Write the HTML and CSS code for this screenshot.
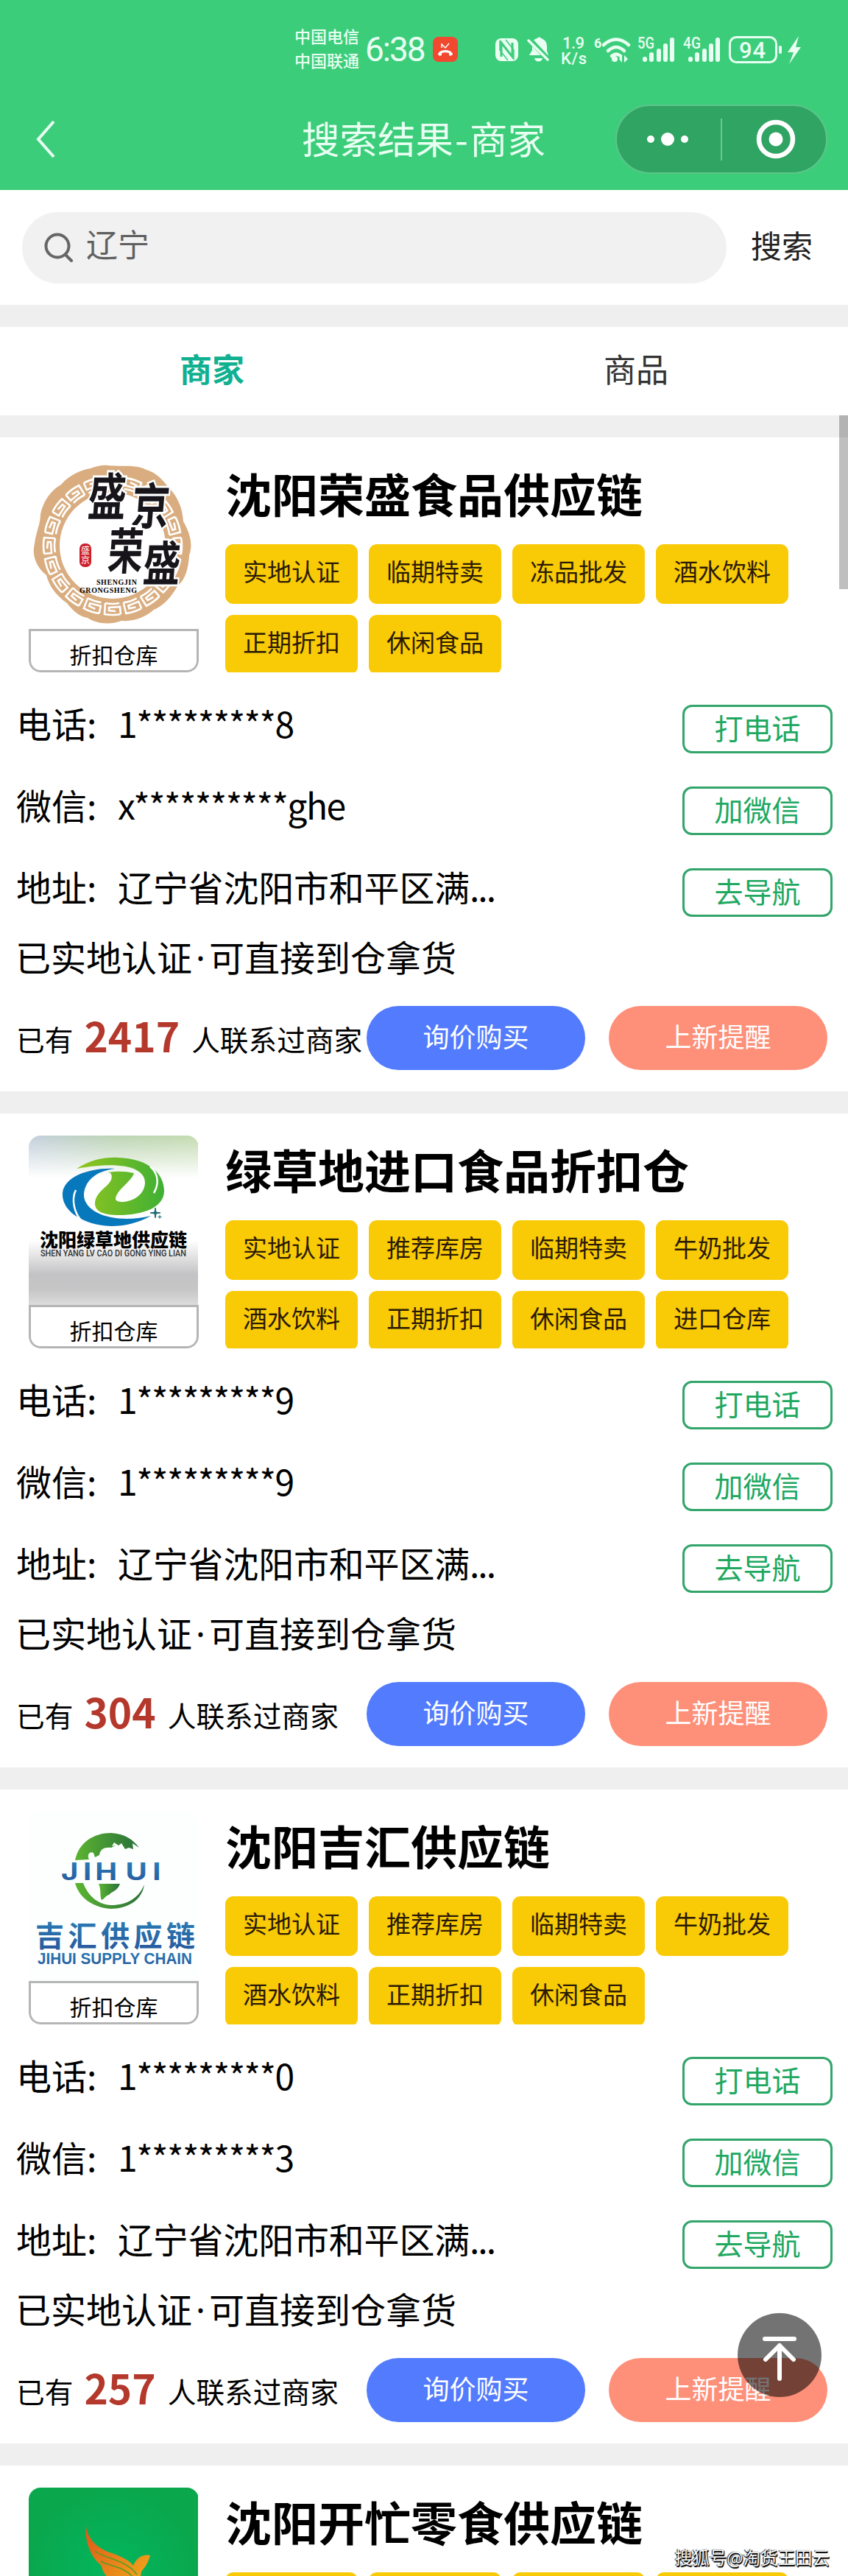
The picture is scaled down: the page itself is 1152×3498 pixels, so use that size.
FILE: index.html
```html
<!DOCTYPE html>
<html lang="zh-CN">
<head>
    <meta charset="UTF-8">
    <meta name="viewport" content="width=device-width, initial-scale=1.0">
    <title>搜索结果-商家</title>
    <link rel="stylesheet" href="styles.css">
</head>
<body>
<div class="page">

    <!-- 顶部 -->
    <header class="header">
        <div class="status-bar">
            <div class="carrier"><span>中国电信</span><span>中国联通</span></div>
            <div class="clock">6:38</div>
            <svg class="call-icon" width="34" height="34" viewBox="0 0 34 34">
                <rect width="34" height="34" rx="8" fill="#f0492f"/>
                <path d="M7 24c1-8 19-8 20 0q-3 3-5 1v-3c-3-1-7-1-10 0v3q-3 2-5-1z" fill="#fff"/>
                <path d="M12 9v6M12 10l5 5 5-6" fill="none" stroke="#fff" stroke-width="1.5"/>
            </svg>
            <svg class="status-icons" width="420" height="50" viewBox="670 42 420 50">
                <g fill="#e8fff2">
                    <!-- NFC -->
                    <rect x="673" y="52" width="31" height="31" rx="8"/>
                    <path d="M681 77V58l15 19V58" fill="none" stroke="#3ccd7b" stroke-width="3"/>
                    <path d="M687 54l11 14v13M679 55v13l11 14" fill="none" stroke="#3ccd7b" stroke-width="1.5"/>
                    <!-- 静音 -->
                    <path d="M719 75l4-7v-7c0-6 3-8 7-9 1-2 4-2 5 0 6 2 8 6 8 12v5l2 6z"/>
                    <path d="M726 79h11c-1 6-10 6-11 0z"/>
                    <path d="M718 52l27 29" stroke="#3ccd7b" stroke-width="7"/>
                    <path d="M718 55l26 26" stroke="#e8fff2" stroke-width="3.5" stroke-linecap="round"/>
                    <text x="764" y="66" class="net-text" textLength="30">1.9</text>
                    <text x="762" y="87" class="net-text" textLength="35">K/s</text>
                    <!-- WiFi -->
                    <text x="807" y="65" class="six">6</text>
                    <g fill="none" stroke="#e8fff2" stroke-width="4.5" stroke-linecap="round">
                        <path d="M820 61q17-15 34 0M826 69q11-10 22 0M831 76q6-5 12 0"/>
                    </g>
                    <circle cx="835" cy="80" r="4"/>
                    <path d="M845 75v10l-4-5zM848 75v10l5-5z"/>
                    <!-- 信号 -->
                    <text x="866" y="66" class="net-gen" textLength="23" lengthAdjust="spacingAndGlyphs">5G</text>
                    <text x="928" y="66" class="net-gen" textLength="24" lengthAdjust="spacingAndGlyphs">4G</text>
                    <g stroke="#e8fff2" stroke-width="6" stroke-linecap="round">
                        <path d="M876 80v1M885 74v7M895 69v12M904 62v19M913 54v27"/>
                        <path d="M938 80v1M947 74v7M957 69v12M966 62v19M975 54v27"/>
                    </g>
                    <!-- 电池 -->
                    <rect x="991.5" y="50.5" width="63" height="34" rx="9" fill="none" stroke="#e8fff2" stroke-width="3"/>
                    <rect x="1058" y="62" width="4" height="11" rx="2"/>
                    <text x="1004" y="79" class="battery-text" textLength="36">94</text>
                    <path d="M1085 49l-15 22h8l-6 16 16-23h-7z"/>
                </g>
            </svg>
        </div>
        <div class="nav-bar">
            <svg class="back" width="28" height="52" viewBox="0 0 28 52">
                <path d="M25 2L4 26l21 24" fill="none" stroke="#e8fff2" stroke-width="4"/>
            </svg>
            <h1 class="nav-title">搜索结果<i>-</i>商家</h1>
            <svg class="capsule" width="290" height="96" viewBox="0 0 290 96">
                <rect x="2" y="2" width="286" height="92" rx="46" fill="#2fa463" stroke="#5cc58a" stroke-width="2"/>
                <g fill="#fff">
                    <circle cx="49" cy="48" r="5"/>
                    <circle cx="72" cy="48" r="9"/>
                    <circle cx="95" cy="48" r="5"/>
                </g>
                <path d="M145 20v57" stroke="#6fc795" stroke-width="2"/>
                <circle cx="219" cy="48" r="23" fill="none" stroke="#fff" stroke-width="6.5"/>
                <circle cx="219" cy="48" r="9.5" fill="#fff"/>
            </svg>
        </div>
    </header>

    <!-- 搜索 -->
    <div class="search">
        <div class="search-box">
            <svg width="40" height="40" viewBox="0 0 40 40">
                <circle cx="18" cy="18" r="15.5" fill="none" stroke="#666" stroke-width="4"/>
                <path d="M29 30l8 8" stroke="#666" stroke-width="4" stroke-linecap="round"/>
            </svg>
            <span>辽宁</span>
        </div>
        <div class="search-btn">搜索</div>
    </div>

    <div class="tabs">
        <div class="tab active">商家</div>
        <div class="tab">商品</div>
    </div>

    <!-- 商家 1 -->
    <div class="card">
        <div class="card-head">
            <div class="logo">
                <svg width="230" height="230" viewBox="0 0 230 230">
                    <defs>
                        <g id="key">
                            <path d="M-11 -93Q0 -95 11 -93L10 -78M-11 -93L-10 -83L5 -84V-88L-4 -89M10 -78Q0 -80 -9 -78"/>
                        </g>
                        <g id="keys">
                            <use href="#key"/>
                            <use href="#key" transform="rotate(18)"/>
                            <use href="#key" transform="rotate(36)"/>
                            <use href="#key" transform="rotate(54)"/>
                            <use href="#key" transform="rotate(72)"/>
                        </g>
                    </defs>
                    <path d="M108 8C128 10 145 6 160 14c14 4 22 14 30 24 14 14 19 30 20 46 8 14 14 30 8 46-1 16-4 32-16 42-8 14-18 26-32 32-14 12-30 16-44 15-16 6-34 4-46-4-12-2-20-10-28-20-14-10-24-22-28-38C10 146 4 130 8 114c2-16 8-26 8-40 4-18 14-32 28-40C56 20 72 14 84 12c8-3 16-5 24-4z" fill="#d9ad80"/>
                    <circle cx="114" cy="117" r="72" fill="#fff"/>
                    <g transform="translate(114 117)" fill="none" stroke="#fff" stroke-width="2.6">
                        <use href="#keys"/>
                        <use href="#keys" transform="rotate(90)"/>
                        <use href="#keys" transform="rotate(180)"/>
                        <use href="#keys" transform="rotate(270)"/>
                    </g>
                    <g class="brush">
                        <text transform="translate(79 76) scale(.86 1.15) skewX(-6)">盛</text>
                        <text transform="translate(138 88) scale(.86 1.12) skewX(-6)">京</text>
                        <text transform="translate(106 149) scale(.8 1.12) skewX(-6)">荣</text>
                        <text transform="translate(154 165) scale(.84 1.08) skewX(-6)">盛</text>
                    </g>
                    <rect x="69" y="114" width="16" height="32" rx="7" fill="#cc1f2b"/>
                    <text x="71" y="128" class="seal">盛</text>
                    <text x="71" y="141" class="seal">京</text>
                    <text x="92" y="170" class="latin" textLength="55">SHENGJIN</text>
                    <text x="69" y="181" class="latin" textLength="78">GRONGSHENG</text>
                </svg>
                <div class="logo-label">折扣仓库</div>
            </div>
            <div class="info">
                <h2>沈阳荣盛食品供应链</h2>
                <div class="tags">
                    <span>实地认证</span><span>临期特卖</span><span>冻品批发</span><span>酒水饮料</span>
                    <span>正期折扣</span><span>休闲食品</span>
                </div>
            </div>
        </div>
        <div class="row"><label>电话:</label><span class="mask">1*********8</span><button>打电话</button></div>
        <div class="row"><label>微信:</label><span class="mask">x**********ghe</span><button>加微信</button></div>
        <div class="row"><label>地址:</label><span class="addr">辽宁省沈阳市和平区满<i>...</i></span><button>去导航</button></div>
        <p class="note">已实地认证<i>·</i>可直接到仓拿货</p>
        <div class="card-foot">
            <div class="count">已有<b>2417</b>人联系过商家</div>
            <div class="btn blue">询价购买</div>
            <div class="btn orange">上新提醒</div>
        </div>
    </div>

    <!-- 商家 2 -->
    <div class="card">
        <div class="card-head">
            <div class="logo">
                <svg width="230" height="230" viewBox="0 0 230 230">
                    <defs>
                        <linearGradient id="silver" x1="0" y1="0" x2="0" y2="1">
                            <stop offset="0" stop-color="#fff" stop-opacity="0"/>
                            <stop offset=".25" stop-color="#fff"/>
                            <stop offset=".62" stop-color="#fff"/>
                            <stop offset=".82" stop-color="#c3c3c5"/>
                            <stop offset=".91" stop-color="#c6c6c7"/>
                            <stop offset="1" stop-color="#dcdcdc"/>
                        </linearGradient>
                        <linearGradient id="sky">
                            <stop offset="0" stop-color="#c3cfdd"/>
                            <stop offset=".5" stop-color="#bdd5b5"/>
                            <stop offset="1" stop-color="#c3dbb0"/>
                        </linearGradient>
                        <linearGradient id="leaf">
                            <stop offset="0" stop-color="#93c51f"/>
                            <stop offset="1" stop-color="#3fb034"/>
                        </linearGradient>
                    </defs>
                    <rect width="230" height="230" fill="url(#sky)"/>
                    <rect width="230" height="230" fill="url(#silver)"/>
                    <path d="M65 45C85 32 105 29 122 30C160 31 184 50 184 75C184 98 155 108 122 108C101 108 90 103 90 92C91 76 108 70 112 60C114 54 112 50 108 50Q126 47 143 51C140 62 119 74 118 86C119 95 157 90 158 64C158 43 125 34 65 45z" fill="url(#leaf)"/>
                    <path d="M165 42C178 53 176 68 170 78" fill="none" stroke="#fff" stroke-width="2.5"/>
                    <path d="M117 45C90 48 75 63 75 82C77 107 120 120 166 109C148 119 130 123 112 123C90 122 76 116 69 112C55 105 45 92 46 78C48 55 85 43 117 45z" fill="#0878bd"/>
                    <path d="M64 74C57 88 63 106 71 115" fill="none" stroke="#fff" stroke-width="2.5"/>
                    <path d="M172 98l1 6 6 1-6 1-1 6-1-6-6-1 6-1zM178 108v5M175.500 110.500h5" fill="#17656e" stroke="#17656e"/>
                    <text x="15" y="151" class="lv-name" textLength="200">沈阳绿草地供应链</text>
                    <text x="16" y="164" class="lv-latin" textLength="198" lengthAdjust="spacingAndGlyphs">SHEN YANG LV CAO DI GONG YING LIAN</text>
                </svg>
                <div class="logo-label">折扣仓库</div>
            </div>
            <div class="info">
                <h2>绿草地进口食品折扣仓</h2>
                <div class="tags">
                    <span>实地认证</span><span>推荐库房</span><span>临期特卖</span><span>牛奶批发</span>
                    <span>酒水饮料</span><span>正期折扣</span><span>休闲食品</span><span>进口仓库</span>
                </div>
            </div>
        </div>
        <div class="row"><label>电话:</label><span class="mask">1*********9</span><button>打电话</button></div>
        <div class="row"><label>微信:</label><span class="mask">1*********9</span><button>加微信</button></div>
        <div class="row"><label>地址:</label><span class="addr">辽宁省沈阳市和平区满<i>...</i></span><button>去导航</button></div>
        <p class="note">已实地认证<i>·</i>可直接到仓拿货</p>
        <div class="card-foot">
            <div class="count">已有<b>304</b>人联系过商家</div>
            <div class="btn blue">询价购买</div>
            <div class="btn orange">上新提醒</div>
        </div>
    </div>

    <!-- 商家 3 -->
    <div class="card">
        <div class="card-head">
            <div class="logo">
                <svg width="230" height="230" viewBox="0 0 230 230">
                    <defs>
                        <linearGradient id="globe">
                            <stop offset="0" stop-color="#5cb531"/>
                            <stop offset="1" stop-color="#28703a"/>
                        </linearGradient>
                        <linearGradient id="ocean" x1="0" y1="0" x2="0" y2="1">
                            <stop offset="0" stop-color="#2a82b8"/>
                            <stop offset="1" stop-color="#28559b"/>
                        </linearGradient>
                    </defs>
                    <rect width="230" height="230" fill="#fdfffe"/>
                    <path d="M63 66C68 42 88 29 112 29C130 30 142 38 150 49L141 43L142 51L136 49L131 51L126 43L122 46L116 42L113 47L118 46L112 49C103 48 97 51 96 59L90 62L88 56C82 53 79 60 82 65z" fill="url(#globe)"/>
                    <path d="M63 97H74C81 115 94 126 112 127C134 127 150 117 157 99C154 120 135 132 111 132C86 130 68 116 63 97z" fill="url(#globe)"/>
                    <path d="M95 98H124C121 107 114 108 109 113C104 114 103 119 99 120C96 114 99 107 95 98z" fill="url(#globe)"/>
                    <text transform="translate(44 93) scale(1.25 1)" x="0 24 37 70 99.500" class="jh-logo" fill="url(#ocean)">JIHUI</text>
                    <text x="9" y="183" class="jh-name" fill="url(#ocean)" textLength="217">吉汇供应链</text>
                    <text x="12" y="207" class="jh-latin" fill="url(#ocean)" textLength="210" lengthAdjust="spacingAndGlyphs">JIHUI SUPPLY CHAIN</text>
                </svg>
                <div class="logo-label">折扣仓库</div>
            </div>
            <div class="info">
                <h2>沈阳吉汇供应链</h2>
                <div class="tags">
                    <span>实地认证</span><span>推荐库房</span><span>临期特卖</span><span>牛奶批发</span>
                    <span>酒水饮料</span><span>正期折扣</span><span>休闲食品</span>
                </div>
            </div>
        </div>
        <div class="row"><label>电话:</label><span class="mask">1*********0</span><button>打电话</button></div>
        <div class="row"><label>微信:</label><span class="mask">1*********3</span><button>加微信</button></div>
        <div class="row"><label>地址:</label><span class="addr">辽宁省沈阳市和平区满<i>...</i></span><button>去导航</button></div>
        <p class="note">已实地认证<i>·</i>可直接到仓拿货</p>
        <div class="card-foot">
            <div class="count">已有<b>257</b>人联系过商家</div>
            <div class="btn blue">询价购买</div>
            <div class="btn orange">上新提醒</div>
        </div>
    </div>

    <!-- 商家 4 -->
    <div class="card">
        <div class="card-head">
            <div class="logo">
                <svg width="230" height="230" viewBox="0 0 230 230">
                    <defs>
                        <radialGradient id="grass">
                            <stop offset="0" stop-color="#03b65d"/>
                            <stop offset="1" stop-color="#0aa74d"/>
                        </radialGradient>
                        <linearGradient id="flame" x1="0" y1="0" x2="1" y2="1">
                            <stop offset="0" stop-color="#dd5418"/>
                            <stop offset="1" stop-color="#f3b51c"/>
                        </linearGradient>
                    </defs>
                    <rect width="230" height="230" fill="url(#grass)"/>
                    <path d="M77 49C80 70 92 83 116 90C132 96 140 102 142 106C146 96 154 90 165 92C162 103 158 108 153 114L148 150L110 124C99 115 100 108 98 105C86 96 76 76 77 49z" fill="url(#flame)"/>
                    <path d="M90 86C100 96 132 97 147 118M98 100C112 108 128 106 142 122" fill="none" stroke="#5b9c25" stroke-width="1.6"/>
                </svg>
                <div class="logo-label">折扣仓库</div>
            </div>
            <div class="info">
                <h2>沈阳开忙零食供应链</h2>
                <div class="tags">
                    <span></span><span></span><span></span><span></span>
                </div>
            </div>
        </div>
    </div>

    <div class="scrollbar"></div>

    <!-- 返回顶部 -->
    <svg class="to-top" width="114" height="114" viewBox="0 0 114 114">
        <circle cx="57" cy="57" r="57" fill="#000" fill-opacity=".55"/>
        <path d="M37 35h40M57 44v45M38 63l19-19 19 19" fill="none" stroke="#fff" stroke-width="6" stroke-linecap="round" stroke-linejoin="round"/>
    </svg>
    <div class="watermark">搜狐号@淘货王田云</div>
</div>
</body>
</html>
```

FILE: styles.css
```css
* {
    box-sizing: border-box;
}
body {
    margin: 0;
    font-family: "Noto Sans CJK SC", sans-serif;
    color: #000;
    background-color: #efefef;
}
h1, h2, p {
    margin: 0;
    font-weight: normal;
}
i {
    font-style: normal;
}
svg {
    display: block;
    flex: none;
}
.page {
    position: relative;
    width: 1152px;
    height: 3498px;
    overflow: hidden;
}

/* 顶部 */
.header {
    height: 258px;
    background-color: #3ccd7b;
    color: #e8fff2;
}
.status-bar {
    height: 134px;
    padding-left: 400px;
    display: flex;
    align-items: center;
}
.carrier {
    display: flex;
    flex-direction: column;
    width: 96px;
    padding-bottom: 4px;
    font-size: 22px;
    font-weight: 500;
    line-height: 33px;
}
.clock {
    width: 92px;
    font: 46px/60px Roboto, sans-serif;
    letter-spacing: -2px;
}
.status-icons {
    margin-left: 48px;
}
.net-text, .net-gen, .six, .battery-text {
    font-family: Roboto, sans-serif;
    font-size: 22px;
    font-weight: 500;
}
.six {
    font-size: 18px;
    font-weight: bold;
}
.battery-text {
    font-size: 31px;
}
.nav-bar {
    display: flex;
    align-items: center;
    height: 110px;
    padding: 0 27px 0 48px;
}
.nav-title {
    margin-left: 334px;
    font-size: 51.5px;
    line-height: 60px;
    flex: 1;
    padding-bottom: 4px;
    white-space: nowrap;
}
.nav-title i {
    display: inline-block;
    width: 22px;
    text-align: center;
}

/* 搜索 */
.search {
    display: flex;
    align-items: center;
    height: 156px;
    padding: 0 0 0 30px;
    background-color: #fff;
}
.search-box {
    display: flex;
    align-items: center;
    width: 957px;
    height: 97px;
    padding-left: 30px;
    border-radius: 49px;
    background-color: #f1f1f1;
    color: #606060;
    font-size: 43px;
    line-height: 60px;
}
.search-box span {
    margin-left: 17px;
    padding-bottom: 12px;
}
.search-btn {
    margin-left: 33px;
    padding-bottom: 9px;
    font-size: 42px;
    line-height: 60px;
    color: #222;
}
.tabs {
    display: flex;
    height: 120px;
    margin: 30px 0;
    background-color: #fff;
}
.tab {
    flex: 1;
    text-align: center;
    font-size: 44px;
    line-height: 112px;
    color: #333;
}
.tab.active {
    font-weight: bold;
    color: #10b090;
}

/* 商家卡片 */
.card {
    height: 888px;
    padding-top: 30px;
    margin-bottom: 30px;
    background-color: #fff;
}
.card-head {
    display: flex;
    height: 289px;
    padding-left: 39px;
    margin-bottom: 44px;
}
.logo {
    width: 231px;
    height: 289px;
    border-radius: 16px;
    overflow: hidden;
}
.logo-label {
    height: 59px;
    border: 3px solid #b5b5b5;
    border-radius: 0 0 16px 16px;
    text-align: center;
    font-size: 30px;
    line-height: 62px;
}
.info {
    margin-left: 36px;
    flex: 1;
}
.info h2 {
    height: 115px;
    font-size: 63px;
    font-weight: bold;
    line-height: 90px;
}
.tags {
    display: flex;
    flex-wrap: wrap;
    gap: 15px;
    height: 174px;
    overflow: hidden;
}
.tags span {
    width: 180px;
    height: 81px;
    border-radius: 11px;
    background-color: #f9ca06;
    color: #2a1a04;
    text-align: center;
    font-size: 33px;
    line-height: 73px;
}
.row {
    display: flex;
    height: 66px;
    margin-bottom: 45px;
    padding: 0 21px 0 22px;
    font-size: 48px;
    line-height: 48px;
}
.row label {
    width: 138px;
}
.mask {
    letter-spacing: -1.5px;
}
.addr {
    letter-spacing: -0.2px;
}
.addr i {
    letter-spacing: -2px;
}
.row button {
    width: 204px;
    height: 66px;
    margin-left: auto;
    padding: 0 0 7px;
    border: 3px solid #32a56b;
    border-radius: 13px;
    background-color: #fff;
    color: #20a860;
    font-family: inherit;
    font-size: 39px;
    line-height: 50px;
}
.note {
    margin-top: -17px;
    padding-left: 21px;
    font-size: 48px;
    line-height: 50px;
}
.note i {
    display: inline-block;
    width: 23px;
    font-family: "Noto Sans", sans-serif;
    text-align: center;
}
.card-foot {
    display: flex;
    margin-top: 40px;
    padding-left: 22px;
}
.count {
    width: 476px;
    height: 87px;
    font-size: 38.7px;
    line-height: 89px;
    white-space: nowrap;
}
.count b {
    position: relative;
    top: 2px;
    margin: 0 16px 0 15px;
    font-size: 55px;
    line-height: 50px;
    color: #b4382c;
}
.btn {
    width: 297px;
    height: 87px;
    border-radius: 44px;
    color: #fff;
    text-align: center;
    font-size: 36px;
    line-height: 80px;
}
.blue {
    background-color: #527bfd;
}
.orange {
    margin-left: 32px;
    background-color: #fe9079;
}

/* logo 文字 */
.brush text {
    font-size: 60px;
    font-weight: bold;
    fill: #17151a;
    stroke: #fff;
    stroke-width: 5px;
    paint-order: stroke;
}
.seal {
    font-size: 12px;
    fill: #fff;
}
.latin {
    font: bold 10px "Liberation Serif", serif;
}
.lv-name {
    font-size: 25px;
    font-weight: 900;
}
.lv-latin {
    font: 500 13px Roboto, sans-serif;
    fill: #333;
}
.jh-logo {
    font: bold 32px Inter, sans-serif;
}
.jh-name {
    font-size: 39px;
    font-weight: bold;
}
.jh-latin {
    font: bold 22px "Liberation Sans", sans-serif;
}

/* 浮层 */
.scrollbar {
    position: absolute;
    top: 564px;
    right: 0;
    width: 12px;
    height: 236px;
    background-color: rgba(0, 0, 0, 0.25);
}
.to-top {
    position: absolute;
    left: 1002px;
    top: 3141px;
}
.watermark {
    position: absolute;
    right: 25px;
    bottom: 9px;
    font-size: 23.5px;
    line-height: 34px;
    color: #fff;
    text-shadow: 1px 1px 1px #000, -1px 0 1px #000, 1px 2px 1px #000;
}
```
